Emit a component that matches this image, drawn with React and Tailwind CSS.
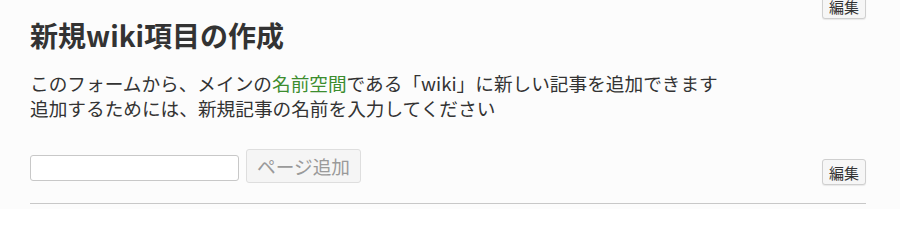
export default function App() {
    const font = { fontFamily: '"Noto Sans CJK JP", "Noto Sans", sans-serif' }

    return (
        <div className="bg-[#fcfcfc] h-[209px] overflow-hidden px-[30px] text-[#333]" style={font}>
            <div className="w-[836px]">
                <div className="flex justify-end -mt-[7px]">
                    <button className="h-[26px] px-[6px] text-[15px] leading-none text-[#333] bg-[#f6f6f6] border border-[#cfcfcf] rounded-[3px] shadow-[0_1px_1px_rgba(0,0,0,0.08)]">
                        編集
                    </button>
                </div>
                <h2 className="text-[28px] font-bold leading-[32px] text-[#333]">新規wiki項目の作成</h2>
                <p className="mt-[19px] text-[18.67px] leading-[25px] text-[#333]">
                    このフォームから、メインの<a className="text-[#3c8d2f]">名前空間</a>である「wiki」に新しい記事を追加できます
                    <br />
                    追加するためには、新規記事の名前を入力してください
                </p>
                <div className="mt-[29px] flex items-start justify-between">
                    <div className="flex items-center gap-[7px]">
                        <input
                            type="text"
                            className="w-[209px] h-[26px] mt-[4px] bg-white border border-[#c8c8c8] rounded-[3px] outline-none px-1"
                        />
                        <button className="w-[115px] h-[34px] text-[18.67px] leading-none text-[#9a9a9a] bg-[#f5f5f5] border border-[#dedede] rounded-[3px]">
                            ページ追加
                        </button>
                    </div>
                    <button className="mt-[10px] h-[26px] px-[6px] text-[15px] leading-none text-[#333] bg-[#f6f6f6] border border-[#cfcfcf] rounded-[3px] shadow-[0_1px_1px_rgba(0,0,0,0.08)]">
                        編集
                    </button>
                </div>
                <div className="mt-[18px] border-t border-[#c8c8c8]" />
            </div>
        </div>
    )
}
